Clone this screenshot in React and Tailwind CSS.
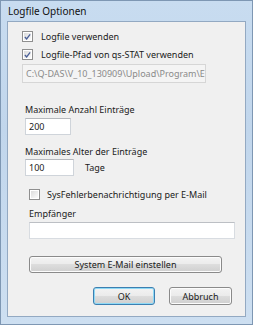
import React from "react";

function Check({ checked }) {
  return (
    <div className="w-[11px] h-[11px] border border-[#8f8f8f] bg-white p-[1px] shrink-0">
      <div className="w-full h-full bg-gradient-to-br from-[#dcdcdc] to-[#fbfbfb] flex items-center justify-center">
        {checked && (
          <svg width="8" height="8" viewBox="0 0 8 8">
            <path d="M1 4 L3 6.2 L7 1" fill="none" stroke="#4a5f97" strokeWidth="1.5" />
          </svg>
        )}
      </div>
    </div>
  );
}

function Btn({ children, className = "", focused }) {
  return (
    <div
      className={
        "rounded-[3px] border flex items-center justify-center text-[#1a1a1a] bg-[linear-gradient(#f3f3f3_0%,#ebebeb_49%,#dddddd_50%,#cfcfcf_100%)] " +
        (focused ? "border-[#3c7fb1] shadow-[inset_0_0_0_1px_#8fd9f5]" : "border-[#8a8a8a] shadow-[inset_0_0_0_1px_#fcfcfc]") +
        " " +
        className
      }
    >
      {children}
    </div>
  );
}

export default function App() {
  return (
    <div
      className="w-[253px] h-[325px] flex flex-col bg-[linear-gradient(180deg,#c8dcf0_0%,#c1d6ec_40%,#cddff1_100%)] border border-[#7e97b3] text-[9px] leading-none text-[#1b1b1b]"
      style={{ fontFamily: '"Noto Sans", "Liberation Sans", sans-serif' }}
    >
      <div className="h-[20px] flex items-center pl-[7px] text-[10px] text-[#111]">Logfile Optionen</div>
      <div className="mx-[6px] h-[296px] bg-[#f0f0f0] border border-[#93a9c2] relative">
        <div className="flex flex-col">
          <div className="flex items-center mt-[9px] ml-[14px] h-[11px]">
            <Check checked />
            <span className="ml-[8px]">Logfile verwenden</span>
          </div>
          <div className="flex items-center mt-[7px] ml-[14px] h-[11px]">
            <Check checked />
            <span className="ml-[8px]">Logfile-Pfad von qs-STAT verwenden</span>
          </div>
          <div className="mt-[4px] ml-[14px] w-[184px] h-[19px] border border-[#d6d6d6] bg-[#f4f4f4] flex items-center pl-[3px] overflow-hidden whitespace-nowrap text-[#8a8a8a]">
            C:\Q-DAS\V_10_130909\Upload\Program\E
          </div>
          <div className="mt-[22px] ml-[17px] h-[9px] flex items-center">Maximale Anzahl Einträge</div>
          <div className="mt-[4px] ml-[17px] w-[46px] h-[17px] border border-[#cfd4da] border-t-[#b5b8bd] bg-white flex items-center pl-[3px]">200</div>
          <div className="mt-[12px] ml-[17px] h-[9px] flex items-center">Maximales Alter der Einträge</div>
          <div className="mt-[3px] ml-[17px] flex items-center">
            <div className="w-[49px] h-[17px] border border-[#cfd4da] border-t-[#b5b8bd] bg-white flex items-center pl-[3px]">100</div>
            <span className="ml-[11px]">Tage</span>
          </div>
          <div className="flex items-center mt-[13px] ml-[21px] h-[11px]">
            <Check />
            <span className="ml-[7px]">SysFehlerbenachrichtigung per E-Mail</span>
          </div>
          <div className="mt-[9px] ml-[21px] h-[9px] flex items-center">Empfänger</div>
          <div className="mt-[4px] ml-[21px] w-[206px] h-[17px] border border-[#d8dce1] border-t-[#bcbfc4] bg-white"></div>
          <Btn className="mt-[17px] ml-[21px] w-[193px] h-[17px]">System E-Mail einstellen</Btn>
          <div className="flex mt-[14px] ml-[85px] gap-[14px]">
            <Btn focused className="w-[62px] h-[18px]">OK</Btn>
            <Btn className="w-[63px] h-[18px]">Abbruch</Btn>
          </div>
        </div>
      </div>
    </div>
  );
}
